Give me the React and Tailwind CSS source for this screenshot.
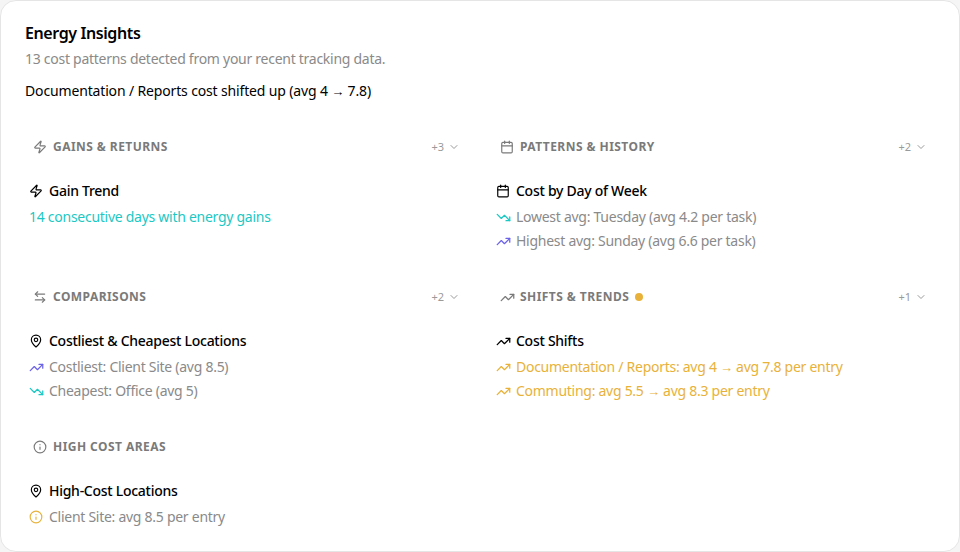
import { ArrowLeftRight, Calendar, ChevronDown, Info, MapPin, TrendingDown, TrendingUp, Zap } from 'lucide-react';

const TEAL = 'text-[#1cc8c4]';
const PURPLE = 'text-[#6c63e8]';
const AMBER = 'text-[#e8b23a]';
const MUTED = 'text-[#8a8a8a]';

function Arrow() {
  return <span className="font-['Liberation_Sans',sans-serif] text-[13px]">→</span>;
}

function TrendUp({ className }) {
  return <TrendingUp size={15} strokeWidth={2} className={`-mx-[0.5px] ${className}`} />;
}

function TrendDown({ className }) {
  return <TrendingDown size={15} strokeWidth={2} className={`-mx-[0.5px] ${className}`} />;
}

function Line({ icon: Icon, iconColor, color = MUTED, children }) {
  return (
    <div className={`flex h-6 items-center gap-1.5 ${color}`}>
      {Icon && <Icon size={14} className={`shrink-0 ${iconColor}`} />}
      <span>{children}</span>
    </div>
  );
}

function Section({ icon: Icon, title, count, dot, itemIcon: ItemIcon, itemTitle, children }) {
  return (
    <section className="flex flex-col">
      <div className="flex h-5 items-center justify-between px-2 pr-2.5">
        <div className="flex items-center gap-1.5">
          <Icon size={14} className="text-[#7a7a7a]" />
          <span className="text-xs font-bold tracking-[0.45px] text-[#7a7a7a]">{title}</span>
          {dot && <span className="h-2 w-2 rounded-full bg-[#e8b23a]" />}
        </div>
        {count && (
          <div className="mr-[-2px] flex items-center gap-1 text-[11px] tracking-normal text-[#9a9a9a]">
            <span>+{count}</span>
            <ChevronDown size={12} />
          </div>
        )}
      </div>
      <div className="mt-6 px-1">
        <div className="flex h-5 items-center gap-1.5 font-medium text-black">
          <ItemIcon size={14} className="shrink-0" />
          <span>{itemTitle}</span>
        </div>
        <div className="mt-[4px]">{children}</div>
      </div>
    </section>
  );
}

export default function App() {
  return (
    <div className="h-[552px] w-[960px] overflow-hidden bg-[#f5f5f5] text-sm tracking-[-0.27px] font-['Noto_Sans',sans-serif]">
      <div className="h-full rounded-2xl border border-[#e5e5e5] bg-white px-6 pt-6">
        <h1 className="text-base leading-4 font-semibold tracking-[-0.4px] text-black">Energy Insights</h1>
        <p className="mt-[10px] leading-4 text-[#8a8a8a]">13 cost patterns detected from your recent tracking data.</p>
        <p className="mt-4 leading-4 tracking-[-0.15px] text-black">
          Documentation / Reports cost shifted up (avg 4 <Arrow /> 7.8)
        </p>

        <div className="mt-[37px] grid grid-cols-2 gap-x-6">
          <div className="h-[150px]">
            <Section icon={Zap} title="GAINS & RETURNS" count={3} itemIcon={Zap} itemTitle="Gain Trend">
              <Line color={TEAL}>14 consecutive days with energy gains</Line>
            </Section>
          </div>
          <div className="h-[150px]">
            <Section icon={Calendar} title="PATTERNS & HISTORY" count={2} itemIcon={Calendar} itemTitle="Cost by Day of Week">
              <Line icon={TrendDown} iconColor={TEAL}>Lowest avg: Tuesday (avg 4.2 per task)</Line>
              <Line icon={TrendUp} iconColor={PURPLE}>Highest avg: Sunday (avg 6.6 per task)</Line>
            </Section>
          </div>
          <div className="h-[150px]">
            <Section icon={ArrowLeftRight} title="COMPARISONS" count={2} itemIcon={MapPin} itemTitle="Costliest & Cheapest Locations">
              <Line icon={TrendUp} iconColor={PURPLE}>Costliest: Client Site (avg 8.5)</Line>
              <Line icon={TrendDown} iconColor={TEAL}>Cheapest: Office (avg 5)</Line>
            </Section>
          </div>
          <div className="h-[150px]">
            <Section icon={TrendUp} title="SHIFTS & TRENDS" count={1} dot itemIcon={TrendUp} itemTitle="Cost Shifts">
              <Line icon={TrendUp} iconColor={AMBER} color={AMBER}>Documentation / Reports: avg 4 <Arrow /> avg 7.8 per entry</Line>
              <Line icon={TrendUp} iconColor={AMBER} color={AMBER}>Commuting: avg 5.5 <Arrow /> avg 8.3 per entry</Line>
            </Section>
          </div>
          <div>
            <Section icon={Info} title="HIGH COST AREAS" itemIcon={MapPin} itemTitle="High-Cost Locations">
              <Line icon={Info} iconColor={AMBER}>Client Site: avg 8.5 per entry</Line>
            </Section>
          </div>
        </div>
      </div>
    </div>
  );
}
